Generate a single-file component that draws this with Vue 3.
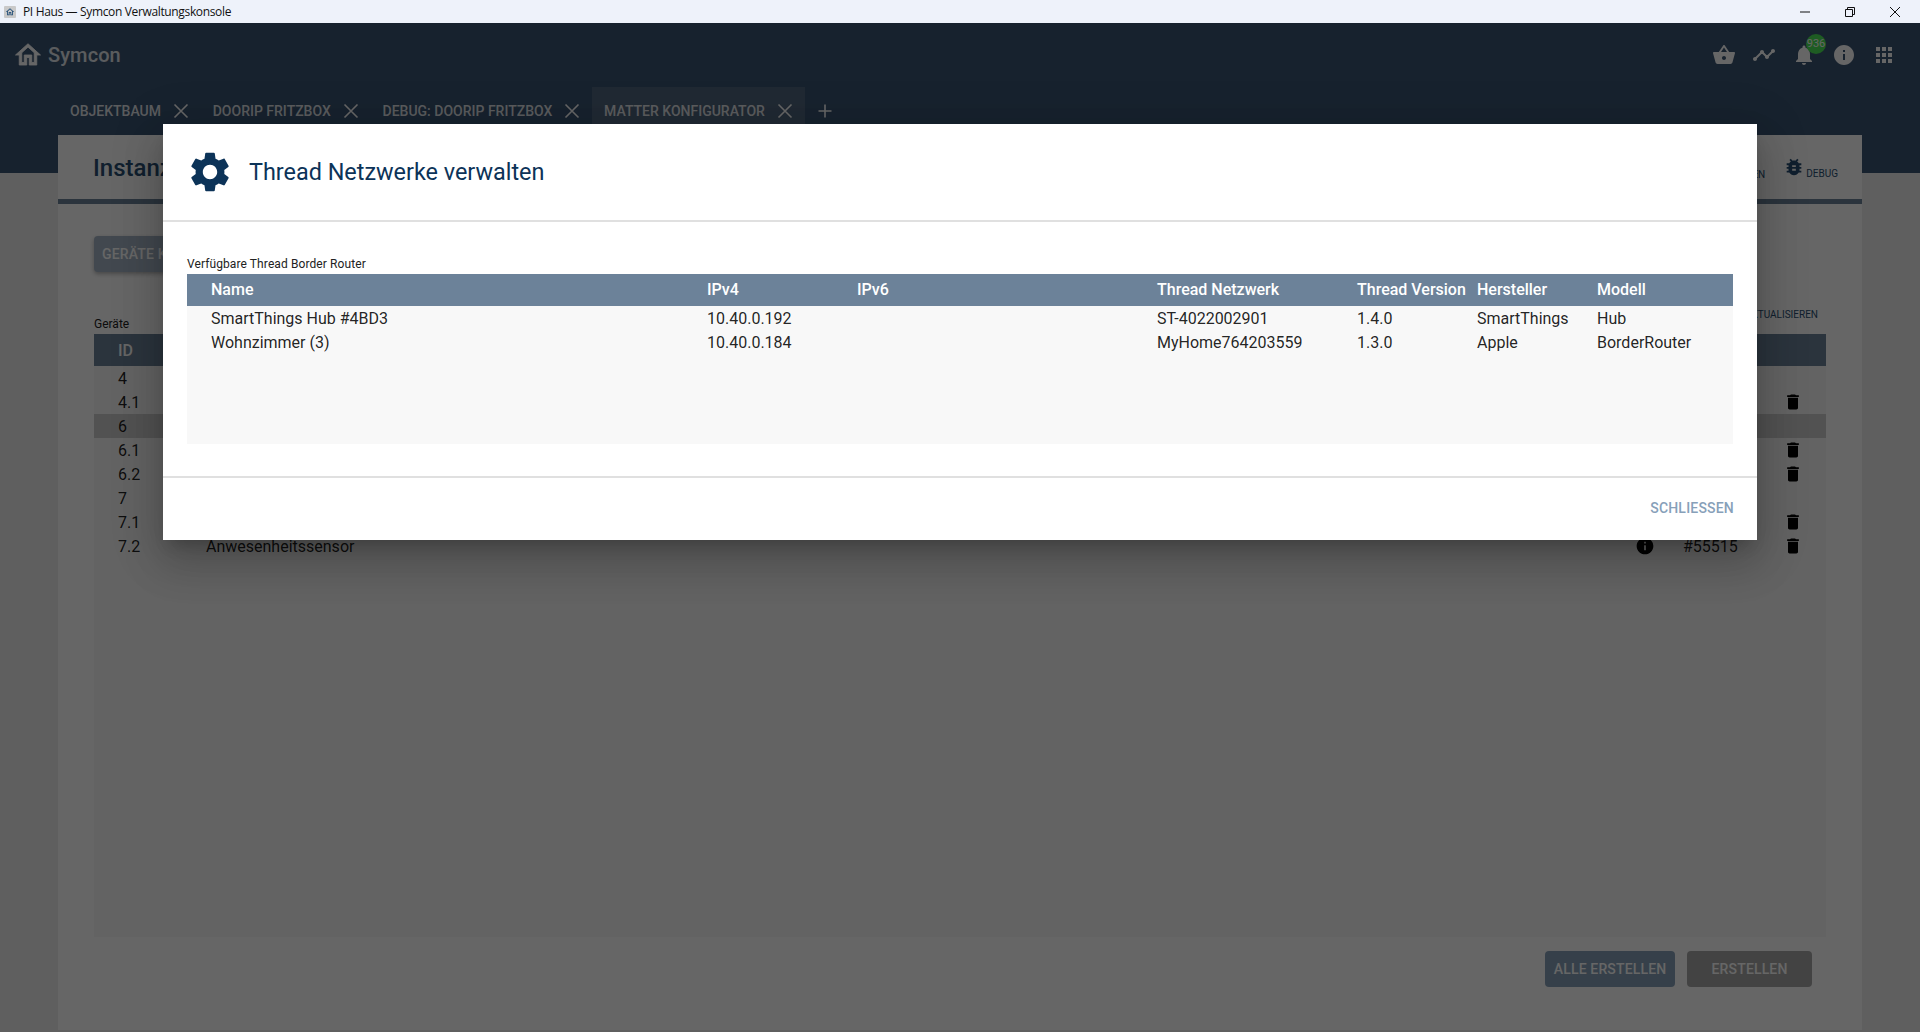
<script setup>
const icons = {
  home: 'M12 5.69l5 4.5V18h-2v-6H9v6H7v-7.81l5-4.5M12 3L2 12h3v8h6v-6h2v6h6v-8h3L12 3z',
  basket: 'M17.21 9l-4.38-6.56c-.19-.28-.51-.42-.83-.42-.32 0-.64.14-.83.43L6.79 9H2c-.55 0-1 .45-1 1 0 .09.01.18.04.27l2.54 9.27c.23.84 1 1.46 1.92 1.46h13c.92 0 1.69-.62 1.93-1.46l2.54-9.27L23 10c0-.55-.45-1-1-1h-4.79zM9 9l3-4.4L15 9H9zm3 8c-1.1 0-2-.9-2-2s.9-2 2-2 2 .9 2 2-.9 2-2 2z',
  timeline: 'M23 8c0 1.1-.9 2-2 2-.18 0-.35-.02-.51-.07l-3.56 3.55c.05.16.07.34.07.52 0 1.1-.9 2-2 2s-2-.9-2-2c0-.18.02-.36.07-.52l-2.55-2.55c-.16.05-.34.07-.52.07s-.36-.02-.52-.07l-4.55 4.56c.05.16.07.33.07.51 0 1.1-.9 2-2 2s-2-.9-2-2 .9-2 2-2c.18 0 .35.02.51.07l4.56-4.55C8.02 9.36 8 9.18 8 9c0-1.1.9-2 2-2s2 .9 2 2c0 .18-.02.36-.07.52l2.55 2.55c.16-.05.34-.07.52-.07s.36.02.52.07l3.55-3.56C19.02 8.35 19 8.18 19 8c0-1.1.9-2 2-2s2 .9 2 2z',
  bell: 'M12 22c1.1 0 2-.9 2-2h-4c0 1.1.89 2 2 2zm6-6v-5c0-3.07-1.64-5.64-4.5-6.32V4c0-.83-.67-1.5-1.5-1.5s-1.5.67-1.5 1.5v.68C7.63 5.36 6 7.92 6 11v5l-2 2v1h16v-1l-2-2z',
  info: 'M12 2C6.48 2 2 6.48 2 12s4.48 10 10 10 10-4.48 10-10S17.52 2 12 2zm1 15h-2v-6h2v6zm0-8h-2V7h2v2z',
  apps: 'M4 8h4V4H4v4zm6 12h4v-4h-4v4zm-6 0h4v-4H4v4zm0-6h4v-4H4v4zm6 0h4v-4h-4v4zm6-10v4h4V4h-4zm-6 4h4V4h-4v4zm6 6h4v-4h-4v4zm0 6h4v-4h-4v4z',
  trash: 'M6 19c0 1.1.9 2 2 2h8c1.1 0 2-.9 2-2V7H6v12zM19 4h-3.5l-1-1h-5l-1 1H5v2h14V4z',
  bug: 'M20 8h-2.81c-.45-.78-1.07-1.45-1.82-1.96L17 4.41 15.59 3l-2.17 2.17C12.96 5.06 12.49 5 12 5c-.49 0-.96.06-1.41.17L8.41 3 7 4.41l1.62 1.63C7.88 6.55 7.26 7.22 6.81 8H4v2h2.09c-.05.33-.09.66-.09 1v1H4v2h2v1c0 .34.04.67.09 1H4v2h2.81c1.04 1.79 2.97 3 5.19 3s4.15-1.21 5.19-3H20v-2h-2.09c.05-.33.09-.66.09-1v-1h2v-2h-2v-1c0-.34-.04-.67-.09-1H20V8zm-6 8h-4v-2h4v2zm0-4h-4v-2h4v2z',
  gear: 'M19.14 12.94c.04-.3.06-.61.06-.94 0-.32-.02-.64-.07-.94l2.03-1.58c.18-.14.23-.41.12-.61l-1.92-3.32c-.12-.22-.37-.29-.59-.22l-2.39.96c-.5-.38-1.03-.7-1.62-.94l-.36-2.54c-.04-.24-.24-.41-.48-.41h-3.84c-.24 0-.43.17-.47.41l-.36 2.54c-.59.24-1.13.57-1.62.94l-2.39-.96c-.22-.08-.47 0-.59.22L2.74 8.87c-.12.21-.08.47.12.61l2.03 1.58c-.05.3-.09.63-.09.94s.02.64.07.94l-2.03 1.58c-.18.14-.23.41-.12.61l1.92 3.32c.12.22.37.29.59.22l2.39-.96c.5.38 1.03.7 1.62.94l.36 2.54c.05.24.24.41.48.41h3.84c.24 0 .44-.17.47-.41l.36-2.54c.59-.24 1.13-.56 1.62-.94l2.39.96c.22.08.47 0 .59-.22l1.92-3.32c.12-.22.07-.47-.12-.61l-2.01-1.58zM12 15.6c-1.98 0-3.6-1.62-3.6-3.6s1.62-3.6 3.6-3.6 3.6 1.62 3.6 3.6-1.62 3.6-3.6 3.6z'
}

const tabs = [
  { label: 'OBJEKTBAUM' },
  { label: 'DOORIP FRITZBOX' },
  { label: 'DEBUG: DOORIP FRITZBOX' },
  { label: 'MATTER KONFIGURATOR', active: true }
]

const headerIcons = ['basket', 'timeline', 'bell', 'info', 'apps']

const devices = [
  { id: '4', name: 'Wohnzimmer' },
  { id: '4.1', name: 'Deckenlampe', trash: true },
  { id: '6', name: 'Flur', selected: true },
  { id: '6.1', name: 'Steckdose', trash: true },
  { id: '6.2', name: 'Temperatursensor', trash: true },
  { id: '7', name: 'Büro' },
  { id: '7.1', name: 'Kontaktsensor', trash: true },
  { id: '7.2', name: 'Anwesenheitssensor', trash: true, info: true, location: '#55515' }
]

const columns = ['Name', 'IPv4', 'IPv6', 'Thread Netzwerk', 'Thread Version', 'Hersteller', 'Modell']
const routers = [
  ['SmartThings Hub #4BD3', '10.40.0.192', '', 'ST-4022002901', '1.4.0', 'SmartThings', 'Hub'],
  ['Wohnzimmer (3)', '10.40.0.184', '', 'MyHome764203559', '1.3.0', 'Apple', 'BorderRouter']
]
</script>

<template>
  <div class="window">
    <div class="titlebar">
      <span class="favicon">
        <svg viewBox="0 0 24 24" width="10" height="10"><path fill="#1d4a75" :d="icons.home" /></svg>
      </span>
      <span class="title-text">PI Haus — Symcon Verwaltungskonsole</span>
      <div class="win-controls">
        <svg class="win-btn" viewBox="0 0 12 12" width="12" height="12"><path d="M1 6h10" stroke="#111" stroke-width="1" fill="none" /></svg>
        <svg class="win-btn" viewBox="0 0 12 12" width="12" height="12"><path d="M1.5 3.5h7v7h-7zM3.5 3.5V1.5h7v7h-2" stroke="#111" stroke-width="1" fill="none" /></svg>
        <svg class="win-btn" viewBox="0 0 12 12" width="12" height="12"><path d="M1 1l10 10M11 1L1 11" stroke="#111" stroke-width="1" fill="none" /></svg>
      </div>
    </div>

    <div class="main">
      <header class="app-header">
        <div class="logo-row">
          <div class="logo">
            <svg viewBox="0 0 24 24" width="30" height="30"><path fill="#fff" stroke="#fff" stroke-width=".7" :d="icons.home" /></svg>
            <span class="logo-text">Symcon</span>
          </div>
          <div class="head-icons">
            <span v-for="n in headerIcons" :key="n" class="head-icon">
              <svg viewBox="0 0 24 24" width="24" height="24"><path fill="#fff" :d="icons[n]" /></svg>
              <span v-if="n === 'bell'" class="badge">936</span>
            </span>
          </div>
        </div>
        <div class="tabs">
          <div v-for="t in tabs" :key="t.label" class="tab" :class="{ active: t.active }">
            <span>{{ t.label }}</span>
            <svg viewBox="0 0 16 16" width="16" height="16"><path d="M1.5 1.5l13 13M14.5 1.5l-13 13" stroke="#fff" stroke-width="1.6" fill="none" /></svg>
          </div>
          <svg class="plus" viewBox="0 0 16 16" width="16" height="16"><path d="M8 1.5v13M1.5 8h13" stroke="#fff" stroke-width="1.6" fill="none" /></svg>
        </div>
      </header>

      <section class="card">
        <div class="card-head">
          <h1>Instanzkonfiguration</h1>
          <div class="card-actions">
            <span class="action">SCHLIESSEN</span>
            <span class="action debug">
              <svg viewBox="0 0 24 24" width="22" height="22"><path fill="#2a4f73" :d="icons.bug" /></svg>
              <span>DEBUG</span>
            </span>
          </div>
        </div>
        <div class="card-body">
          <button class="btn koppeln">GERÄTE KOPPELN</button>
          <div class="list-head">
            <span>Geräte</span>
            <span class="refresh">AKTUALISIEREN</span>
          </div>
          <div class="bg-table">
            <div class="bg-row bg-header"><span>ID</span><span>Name</span></div>
            <div v-for="d in devices" :key="d.id" class="bg-row" :class="{ selected: d.selected }">
              <span>{{ d.id }}</span>
              <span class="bg-name">{{ d.name }}</span>
              <svg v-if="d.info" class="bg-info" viewBox="0 0 24 24" width="20" height="20"><path fill="#000" :d="icons.info" /></svg>
              <span v-if="d.location" class="bg-loc">{{ d.location }}</span>
              <svg v-if="d.trash" class="bg-trash" viewBox="0 0 24 24" width="20" height="20"><path fill="#000" :d="icons.trash" /></svg>
            </div>
          </div>
          <div class="card-foot">
            <button class="btn primary alle">ALLE ERSTELLEN</button>
            <button class="btn disabled">ERSTELLEN</button>
          </div>
        </div>
      </section>

      <div class="overlay"></div>

      <div class="dialog">
        <div class="dialog-head">
          <svg viewBox="0 0 24 24" width="48" height="48"><path fill="#0c3358" :d="icons.gear" /></svg>
          <h2>Thread Netzwerke verwalten</h2>
        </div>
        <div class="dialog-body">
          <div class="table-label">Verfügbare Thread Border Router</div>
          <div class="router-table">
            <div class="router-row router-header">
              <span v-for="c in columns" :key="c">{{ c }}</span>
            </div>
            <div v-for="r in routers" :key="r[0]" class="router-row">
              <span v-for="(v, i) in r" :key="i">{{ v }}</span>
            </div>
          </div>
        </div>
        <div class="dialog-foot">
          <button class="close-btn">SCHLIESSEN</button>
        </div>
      </div>
    </div>
  </div>
</template>

<style>
html, body { margin: 0; overflow: hidden; }
</style>

<style scoped>
.window {
  width: 1920px;
  height: 1032px;
  display: flex;
  flex-direction: column;
  overflow: hidden;
  font-family: Roboto, "Liberation Sans", sans-serif;
}
.titlebar {
  height: 23px;
  flex: none;
  background: #eef2fa;
  display: flex;
  align-items: center;
  padding-left: 4px;
  color: #111;
}
.favicon {
  width: 12px;
  height: 12px;
  background: #c9c9c9;
  border-radius: 1px;
  display: flex;
  align-items: center;
  justify-content: center;
  margin-right: 7px;
}
.title-text { font: 12px "Open Sans", sans-serif; letter-spacing: -0.35px; }
.win-controls {
  margin-left: auto;
  display: flex;
  gap: 33px;
  padding-right: 19px;
  align-items: center;
}
.main {
  flex: 1;
  position: relative;
  background: #eeeeee;
  min-height: 0;
  display: flex;
  flex-direction: column;
}
.app-header {
  height: 150px;
  flex: none;
  background: #3a5573;
  color: #fff;
}
.logo-row {
  height: 64px;
  display: flex;
  align-items: center;
  justify-content: space-between;
  padding: 0 24px 0 13px;
}
.logo { display: flex; align-items: center; gap: 5px; }
.logo-text { font-size: 20px; font-weight: 500; opacity: .85; letter-spacing: .1px; }
.head-icons { display: flex; gap: 16px; }
.head-icon { position: relative; display: block; width: 24px; height: 24px; }
.badge {
  position: absolute;
  top: -9px;
  left: 14px;
  width: 20px;
  height: 20px;
  border-radius: 50%;
  background: #4de657;
  font-size: 11px;
  line-height: 20px;
  text-align: center;
  color: #fff;
}
.tabs {
  display: flex;
  align-items: center;
  height: 48px;
  padding-left: 58px;
}
.tab {
  display: flex;
  align-items: center;
  gap: 11.75px;
  height: 48px;
  padding: 0 12px;
  font-size: 14px;
  font-weight: 500;
  color: rgba(255, 255, 255, .85);
}
.tab.active { background: #52687f; }
.plus { margin-left: 12px; }
.card {
  flex: 1;
  margin: -38px 58px 2px;
  background: #fff;
  position: relative;
  display: flex;
  flex-direction: column;
  min-height: 0;
}
.card-head {
  height: 64px;
  flex: none;
  box-sizing: content-box;
  border-bottom: 5px solid #6c8299;
  display: flex;
  align-items: center;
  justify-content: space-between;
  padding: 0 24px 0 35px;
}
.card-head h1 {
  margin: 1px 0 0;
  font-size: 24px;
  font-weight: 500;
  color: #2a4f73;
}
.card-actions { display: flex; align-items: center; gap: 18px; }
.action { font-size: 10px; color: #2a4f73; padding-top: 14px; }
.debug { display: flex; align-items: center; gap: 1px; padding-top: 0; }
.debug span { padding-top: 13px; }
.card-body {
  flex: 1;
  min-height: 0;
  display: flex;
  flex-direction: column;
  padding: 32px 36px 0;
}
.btn {
  height: 36px;
  border: 0;
  border-radius: 4px;
  font: 500 14px Roboto, sans-serif;
  letter-spacing: .15px;
  color: #fff;
  padding: 0 8px;
}
.primary { background: #87a0b9; }
.disabled { background: #a8a8a8; padding: 0 24.5px; }
.koppeln {
  align-self: flex-start;
  background: #a5b5c6;
  box-shadow: 0 2px 4px rgba(0, 0, 0, .3);
}
.list-head {
  display: flex;
  justify-content: space-between;
  align-items: flex-end;
  height: 62px;
  font-size: 12px;
  color: #222;
  padding-bottom: 3px;
  box-sizing: border-box;
}
.refresh {
  font-size: 10px;
  color: #2a4f73;
  padding-right: 8px;
  padding-bottom: 11px;
}
.bg-table {
  flex: 1;
  min-height: 0;
  background: #f8f8f8;
  font-size: 16px;
  color: rgba(0, 0, 0, .87);
}
.bg-row {
  display: flex;
  align-items: center;
  position: relative;
  height: 24px;
  padding-left: 24px;
}
.bg-row > span:first-child { width: 88px; }
.bg-header {
  height: 32px;
  background: #6c8299;
  color: #fff;
  font-weight: 500;
}
.selected { background: #cecece; }
.bg-info { position: absolute; right: 171px; top: 2px; }
.bg-loc { position: absolute; left: 1589px; }
.bg-trash { position: absolute; right: 23px; top: 2px; }
.card-foot {
  flex: none;
  height: 93px;
  display: flex;
  justify-content: flex-end;
  gap: 12px;
  padding: 14px 14px 0 0;
  box-sizing: border-box;
}
.alle { width: 130px; }
.overlay {
  position: absolute;
  inset: 0;
  background: rgba(0, 0, 0, .6);
}
.dialog {
  position: absolute;
  left: 163px;
  top: 101px;
  width: 1594px;
  height: 416px;
  background: #fff;
  display: flex;
  flex-direction: column;
  box-shadow: 0 11px 15px -7px rgba(0, 0, 0, .2), 0 24px 38px 3px rgba(0, 0, 0, .14), 0 9px 46px 8px rgba(0, 0, 0, .12);
}
.dialog-head {
  height: 96px;
  flex: none;
  display: flex;
  align-items: center;
  gap: 15px;
  padding-left: 23px;
  border-bottom: 2px solid #e0e0e0;
}
.dialog-head h2 {
  margin: 0;
  font-size: 23.4px;
  font-weight: 400;
  color: #0c3358;
}
.dialog-body {
  flex: 1;
  padding: 35px 24px 0;
  min-height: 0;
}
.table-label {
  font-size: 12px;
  letter-spacing: .1px;
  color: #222;
  line-height: 15px;
  margin-bottom: 2px;
}
.router-table {
  height: 170px;
  background: #f8f8f8;
  font-size: 16px;
  color: rgba(0, 0, 0, .87);
}
.router-row {
  display: grid;
  grid-template-columns: 496px 150px 300px 200px 120px 120px 160px;
  height: 24px;
  line-height: 24px;
  margin-top: 0;
}
.router-row > span { padding-left: 24px; white-space: nowrap; }
.router-row > span:nth-child(n+5) { padding-left: 0; margin-left: 24px; }
.router-header {
  height: 32px;
  line-height: 32px;
  background: #6c8299;
  color: #fff;
  font-weight: 500;
  margin-bottom: 1px;
}
.dialog-foot {
  height: 59px;
  flex: none;
  border-top: 2px solid #e0e0e0;
  display: flex;
  align-items: center;
  justify-content: flex-end;
  padding: 0 23px 3px 0;
}
.close-btn {
  border: 0;
  background: transparent;
  font: 500 14px Roboto, sans-serif;
  letter-spacing: .2px;
  color: #87a0b9;
  padding: 0;
}
</style>
